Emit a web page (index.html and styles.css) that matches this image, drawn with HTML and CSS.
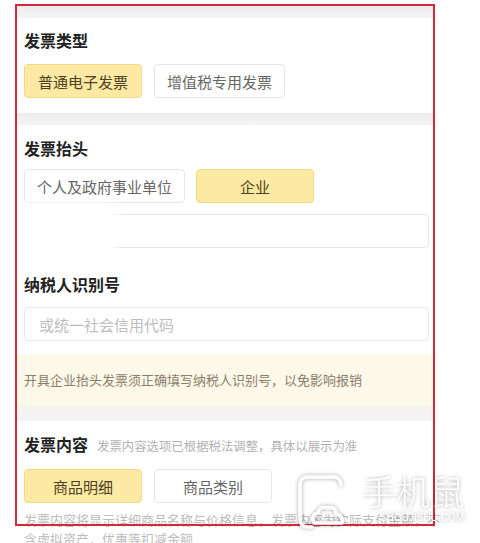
FILE: index.html
```html
<!DOCTYPE html>
<html lang="zh-CN">
<head>
    <meta charset="UTF-8">
    <meta name="viewport" content="width=device-width, initial-scale=1.0">
    <title>开具发票</title>
    <link rel="stylesheet" href="styles.css">
</head>
<body>

    <div class="page">
        <div class="gap"></div>

        <section class="block block-type">
            <h3 class="title">发票类型</h3>
            <div class="options">
                <button class="opt active">普通电子发票</button>
                <button class="opt">增值税专用发票</button>
            </div>
        </section>

        <div class="gap"></div>

        <section class="block block-head">
            <h3 class="title">发票抬头</h3>
            <div class="options">
                <button class="opt">个人及政府事业单位</button>
                <button class="opt active">企业</button>
            </div>
            <div class="field-wrap">
                <input class="field" type="text">
                <div class="blur-patch"></div>
            </div>

            <h3 class="title spaced">纳税人识别号</h3>
            <input class="field" type="text" placeholder="或统一社会信用代码">
        </section>

        <div class="notice">开具企业抬头发票须正确填写纳税人识别号，以免影响报销</div>

        <div class="gap gap-big"></div>

        <section class="block block-content">
            <h3 class="title">发票内容<span class="sub">发票内容选项已根据税法调整，具体以展示为准</span></h3>
            <div class="options">
                <button class="opt active">商品明细</button>
                <button class="opt">商品类别</button>
            </div>
            <p class="desc">发票内容将显示详细商品名称与价格信息，发票内容为实际支付金额，不<br>含虚拟资产，优惠等扣减金额</p>
        </section>
    </div>

    <!-- red annotation box -->
    <div class="frame"></div>

    <!-- watermark -->
    <div class="watermark">
        <svg class="wm-icon" width="56" height="62" viewBox="0 0 56 62">
            <path d="M38 4 H12 Q4 4 4 12 V46 Q4 54 12 54 H16" fill="none" stroke="#fff" stroke-width="3.5" stroke-linecap="round"/>
            <path d="M38 4 Q44 4 45 12" fill="none" stroke="#fff" stroke-width="3.5" stroke-linecap="round"/>
            <path d="M18 50 Q14 42 22 40 Q24 32 32 35 Q40 33 40 41 Q48 43 46 50 Z" fill="none" stroke="#fff" stroke-width="3.5" stroke-linejoin="round"/>
        </svg>
        <div class="wm-text">
            <div class="wm-name">手机鼠</div>
            <div class="wm-url">SHOUJISHU.COM</div>
        </div>
    </div>

</body>
</html>
```

FILE: styles.css
```css
body {
    margin: 0;
    padding: 0;
    background: #fff;
    font-family: "Noto Sans CJK SC", "Noto Sans", sans-serif;
    color: #222;
    width: 480px;
    height: 543px;
    overflow: hidden;
    position: relative;
}

.page {
    margin-left: 17px;
    width: 416px;
    padding-top: 6px;
}

.gap {
    height: 12px;
    background: linear-gradient(#ececec, #f5f5f5);
}

.gap-big {
    height: 15px;
    background: linear-gradient(#f6f4ee, #f3f3f4);
}

.block {
    padding: 12px 4px 13px 7px;
    background: #fff;
}

.block-type {
    padding-top: 11px;
    padding-bottom: 15px;
}

.title {
    margin: 0;
    font-size: 16px;
    line-height: 22px;
    font-weight: bold;
    color: #222;
    display: flex;
    align-items: baseline;
}

.title.spaced {
    margin-top: 25px;
}

.sub {
    margin-left: 9px;
    font-size: 12.4px;
    font-weight: normal;
    color: #b2b2b2;
}

.options {
    display: flex;
    gap: 12px;
    margin-top: 13px;
}

.block-head .options {
    margin-top: 10px;
    gap: 11px;
}

.block-content .options {
    margin-top: 12px;
}

.opt {
    min-width: 118px;
    height: 34px;
    padding: 0 12px;
    border: 1px solid #e6e6e6;
    border-radius: 4px;
    background: #fff;
    font-family: "Noto Sans CJK SC", sans-serif;
    font-size: 15px;
    color: #666;
    cursor: pointer;
}

.opt.active {
    background: #fbe9a4;
    border-color: #f2da83;
    color: #4f4020;
}

.field-wrap {
    position: relative;
    margin-top: 11px;
}

.field {
    display: block;
    box-sizing: border-box;
    width: 405px;
    height: 34px;
    margin: 0;
    padding: 0 14px;
    border: 1px solid #e8e8e8;
    border-radius: 4px;
    font-family: "Noto Sans CJK SC", sans-serif;
    font-size: 15px;
    color: #333;
    outline: none;
}

.title.spaced + .field {
    margin-top: 12px;
}

.field::placeholder {
    color: #bdbdbd;
}

.blur-patch {
    position: absolute;
    left: -14px;
    top: -10px;
    width: 106px;
    height: 56px;
    background: #fff;
    filter: blur(5px);
}

.notice {
    height: 52px;
    line-height: 52px;
    padding-left: 7px;
    background: #fcf8ea;
    font-size: 13px;
    color: #8b7e69;
}

.desc {
    margin: 7px -40px 0 0;
    font-size: 13px;
    line-height: 19px;
    color: #bcbcbc;
    white-space: nowrap;
}

.frame {
    position: absolute;
    left: 15px;
    top: 4px;
    width: 416px;
    height: 518px;
    border: 2px solid #d42a38;
}

.watermark {
    position: absolute;
    left: 296px;
    top: 470px;
    display: flex;
    align-items: flex-start;
    gap: 10px;
    filter: drop-shadow(0 0 2px rgba(0, 0, 0, 0.35));
}

.wm-icon {
    margin-top: 3px;
}

.wm-name {
    font-family: "Noto Sans CJK SC", sans-serif;
    font-size: 34px;
    font-weight: 300;
    line-height: 42px;
    letter-spacing: 0;
    color: #fff;
}

.wm-url {
    font-family: "Liberation Sans", sans-serif;
    font-size: 10px;
    line-height: 12px;
    color: #fff;
    text-align: right;
}
```
